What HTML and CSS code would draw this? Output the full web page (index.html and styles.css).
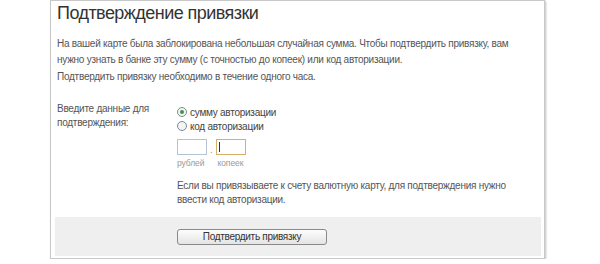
FILE: index.html
```html
<!DOCTYPE html>
<html lang="ru">
<head>
    <meta charset="UTF-8">
    <title>Подтверждение привязки</title>
    <link rel="stylesheet" href="styles.css">
</head>
<body>
    <div class="dialog">
        <div class="dialog-body">
            <h1 class="dialog-title">Подтверждение привязки</h1>
            <p class="dialog-text">На вашей карте была заблокирована небольшая случайная сумма. Чтобы подтвердить привязку, вам нужно узнать в банке эту сумму (с точностью до копеек) или код авторизации.</p>
            <p class="dialog-text">Подтвердить привязку необходимо в течение одного часа.</p>

            <div class="form-row">
                <div class="form-label">Введите данные для подтверждения:</div>
                <div class="form-field">
                    <label class="radio"><span class="radio-mark checked"></span>сумму авторизации</label>
                    <label class="radio"><span class="radio-mark"></span>код авторизации</label>

                    <div class="amount">
                        <div class="amount-part">
                            <span class="amount-input"></span>
                            <span class="amount-caption">рублей</span>
                        </div>
                        <span class="amount-dot">.</span>
                        <div class="amount-part">
                            <span class="amount-input focused"><span class="caret"></span></span>
                            <span class="amount-caption">копеек</span>
                        </div>
                    </div>

                    <p class="form-note">Если вы привязываете к счету валютную карту, для подтверждения нужно ввести код авторизации.</p>
                </div>
            </div>
        </div>

        <div class="dialog-footer">
            <button class="button">Подтвердить привязку</button>
        </div>
    </div>
</body>
</html>
```

FILE: styles.css
```css
body {
    margin: 0;
    background: #fff;
    font-family: 'Liberation Sans', Arial, sans-serif;
    color: #555;
}

.dialog {
    width: 495px;
    height: 259px;
    margin: 0 0 0 50px;
    border: 1px solid #c8c8c8;
    box-shadow: 1px 1px 2px rgba(0, 0, 0, 0.25);
    padding: 0 3px 2px 4px;
    box-sizing: border-box;
    display: flex;
    flex-direction: column;
}

.dialog-body {
    flex: 1;
    padding: 0 0 0 2px;
    font-size: 10px;
    letter-spacing: -0.25px;
}

.dialog-title {
    margin: 1px 0 0;
    font-size: 18px;
    font-weight: normal;
    line-height: 22px;
    letter-spacing: -0.55px;
    color: #333;
}

.dialog-text {
    max-width: 470px;
    margin: 0;
    line-height: 16px;
}

.dialog-title + .dialog-text {
    margin-top: 12px;
}

.dialog-text + .dialog-text {
    margin-top: 1px;
}

.form-row {
    display: flex;
    margin-top: 17px;
}

.form-label {
    width: 120px;
    line-height: 14px;
}

.form-field {
    flex: 1;
    padding-top: 3px;
}

.radio {
    display: flex;
    align-items: center;
    gap: 3px;
    height: 14px;
    color: #444;
}

.radio-mark {
    width: 8px;
    height: 8px;
    border: 1px solid #7a8a9a;
    border-radius: 50%;
    background: #f4f4f4;
    position: relative;
}

.radio-mark.checked::after {
    content: '';
    position: absolute;
    left: 2px;
    top: 2px;
    width: 4px;
    height: 4px;
    border-radius: 50%;
    background: #3a9a3a;
}

.amount {
    display: flex;
    margin-top: 6px;
    gap: 3px;
}

.amount-part {
    display: flex;
    flex-direction: column;
}

.amount-input {
    width: 28px;
    height: 14px;
    border: 1px solid #b4c4d4;
    position: relative;
}

.amount-input.focused {
    border-color: #d4b06a;
}

.caret {
    position: absolute;
    left: 2px;
    top: 2px;
    width: 1px;
    height: 10px;
    background: #333;
}

.amount-caption {
    font-size: 8.5px;
    letter-spacing: -0.1px;
    line-height: 12px;
    color: #999;
    margin-top: 2px;
}

.amount-dot + .amount-part .amount-caption {
    padding-left: 2px;
}

.amount-dot {
    color: #999;
    line-height: 14px;
    padding-top: 4px;
}

.form-note {
    max-width: 352px;
    margin: 10px 0 0;
    line-height: 14px;
}

.dialog-footer {
    background: #efefef;
    height: 39px;
    padding: 12px 0 0 122px;
    box-sizing: border-box;
}

.button {
    display: block;
    width: 150px;
    height: 16px;
    padding: 0;
    border: 1px solid #8a8a8a;
    border-radius: 3px;
    background: linear-gradient(#fdfdfd, #e4e4e4);
    font-family: 'Liberation Sans', Arial, sans-serif;
    font-size: 10px;
    letter-spacing: -0.3px;
    line-height: 14px;
    color: #333;
}
```
